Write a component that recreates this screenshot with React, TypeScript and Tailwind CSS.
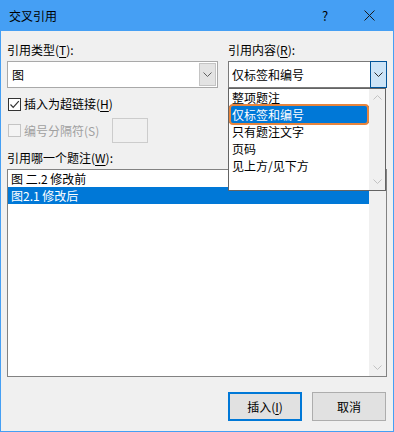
import React from "react";

function Chevron({ up = false, color = "#606060" }: { up?: boolean; color?: string }) {
  return (
    <svg
      width="9"
      height="5"
      viewBox="0 0 9 5"
      className={up ? "rotate-180" : ""}
    >
      <polyline
        points="0.5,0.5 4.5,4.5 8.5,0.5"
        fill="none"
        stroke={color}
        strokeWidth="1"
      />
    </svg>
  );
}

function Acc({ children }: { children: React.ReactNode }) {
  return <span className="underline underline-offset-2">{children}</span>;
}

const contentOptions = ["整项题注", "仅标签和编号", "只有题注文字", "页码", "见上方/见下方"];

export default function App() {
  return (
    <div className="w-[394px] h-[432px] flex flex-col bg-[#459ff4] font-['Noto_Sans_CJK_SC',sans-serif] text-[12px] leading-4 text-black">
      {/* Title bar */}
      <div className="h-[31px] shrink-0 flex items-center">
        <span className="flex-1 pl-[9px]">交叉引用</span>
        <div className="w-[44px] h-full flex items-center justify-center text-[13px]">
          ?
        </div>
        <div className="w-[44px] h-full mr-[3px] flex items-center justify-center">
          <svg width="11" height="11" viewBox="0 0 11 11">
            <path d="M0.5 0.5 L10.5 10.5 M10.5 0.5 L0.5 10.5" stroke="#1a1a1a" strokeWidth="1" />
          </svg>
        </div>
      </div>

      {/* Body */}
      <div className="flex-1 mx-px mb-px bg-[#f0f0f0] px-[6px] pt-[11px] pb-[10px] flex flex-col">
        <div className="grid grid-cols-[211px_159px] gap-x-[10px]">
          {/* Left column */}
          <div className="flex flex-col">
            <div className="h-4">
              引用类型(<Acc>T</Acc>):
            </div>
            <div className="mt-[3px] h-[27px] flex bg-white border border-[#a9a9a9]">
              <span className="flex-1 pl-[4px] flex items-center">图</span>
              <div className="w-[17px] my-px mr-px bg-[#e3e3e3] border border-[#c4c4c4] flex items-center justify-center">
                <Chevron />
              </div>
            </div>
            <div className="mt-[8px] h-4 flex items-center gap-[3px]">
              <div className="w-[13px] h-[13px] ml-px border border-[#333] bg-white flex items-center justify-center">
                <svg width="11" height="11" viewBox="0 0 11 11">
                  <path d="M1.5 5.5 L4.2 8.3 L9.8 2.2" fill="none" stroke="#333" strokeWidth="1.2" />
                </svg>
              </div>
              <span>
                插入为超链接(<Acc>H</Acc>)
              </span>
            </div>
            <div className="mt-[6px] h-[25px] flex items-center">
              <div className="w-[13px] h-[13px] ml-px border border-[#c4c4c4] bg-[#f4f4f4]" />
              <span className="ml-[3px] text-[#a0a0a0]">编号分隔符(S)</span>
              <div className="ml-[13px] w-[36px] h-[25px] border border-[#cccccc] bg-[#f0f0f0]" />
            </div>
          </div>

          {/* Right column */}
          <div className="flex flex-col">
            <div className="h-4">
              引用内容(<Acc>R</Acc>):
            </div>
            <div className="relative mt-[3px]">
              <div className="h-[27px] flex bg-white border border-[#7a7a7a]">
                <span className="flex-1 pl-[3px] flex items-center">仅标签和编号</span>
                <div className="w-[17px] -my-px -mr-px bg-[#cce4f7] border border-[#005499] flex items-center justify-center">
                  <Chevron color="#2b2b2b" />
                </div>
              </div>

              {/* Dropdown list */}
              <div className="absolute left-0 top-[27px] z-10 w-[158px] h-[103px] flex bg-white border border-[#646464]">
                <div className="flex-1 flex flex-col">
                  {contentOptions.map((opt) =>
                    opt === "仅标签和编号" ? (
                      <div key={opt} className="relative h-[17px] pl-[3px] flex items-center bg-[#0078d7] text-white">
                        {opt}
                        <div className="absolute inset-x-0 -top-[2px] -bottom-[2px] border-2 border-[#e8843c] rounded-[4px]" />
                      </div>
                    ) : (
                      <div key={opt} className="h-[17px] pl-[3px] flex items-center">
                        {opt}
                      </div>
                    )
                  )}
                </div>
                <div className="w-[16px] bg-[#f0f0f0] flex flex-col justify-between">
                  <div className="h-[17px] flex items-center justify-center">
                    <Chevron up color="#c2c2c2" />
                  </div>
                  <div className="h-[17px] flex items-center justify-center">
                    <Chevron color="#c2c2c2" />
                  </div>
                </div>
              </div>
            </div>
          </div>
        </div>

        <div className="mt-[7px] h-4">
          引用哪一个题注(<Acc>W</Acc>):
        </div>
        <div className="mt-[3px] h-[208px] flex bg-white border border-[#828282]">
          <div className="flex-1 flex flex-col">
            <div className="h-[17px] pl-[3px] flex items-center">图 二.2 修改前</div>
            <div className="h-[17px] pl-[3px] flex items-center bg-[#0078d7] text-white">图2.1 修改后</div>
          </div>
          <div className="w-[17px] bg-[#f0f0f0] flex flex-col justify-between">
            <div className="h-[17px] flex items-center justify-center">
              <Chevron up color="#c2c2c2" />
            </div>
            <div className="h-[17px] flex items-center justify-center">
              <Chevron color="#c2c2c2" />
            </div>
          </div>
        </div>

        <div className="mt-[15px] flex justify-end gap-[10px] pr-px">
          <button className="w-[74px] h-[29px] bg-[#e1e1e1] border-2 border-[#0078d7] flex items-center justify-center">
            插入(<Acc>I</Acc>)
          </button>
          <button className="w-[74px] h-[29px] bg-[#e1e1e1] border border-[#adadad] flex items-center justify-center">
            取消
          </button>
        </div>
      </div>
    </div>
  );
}
